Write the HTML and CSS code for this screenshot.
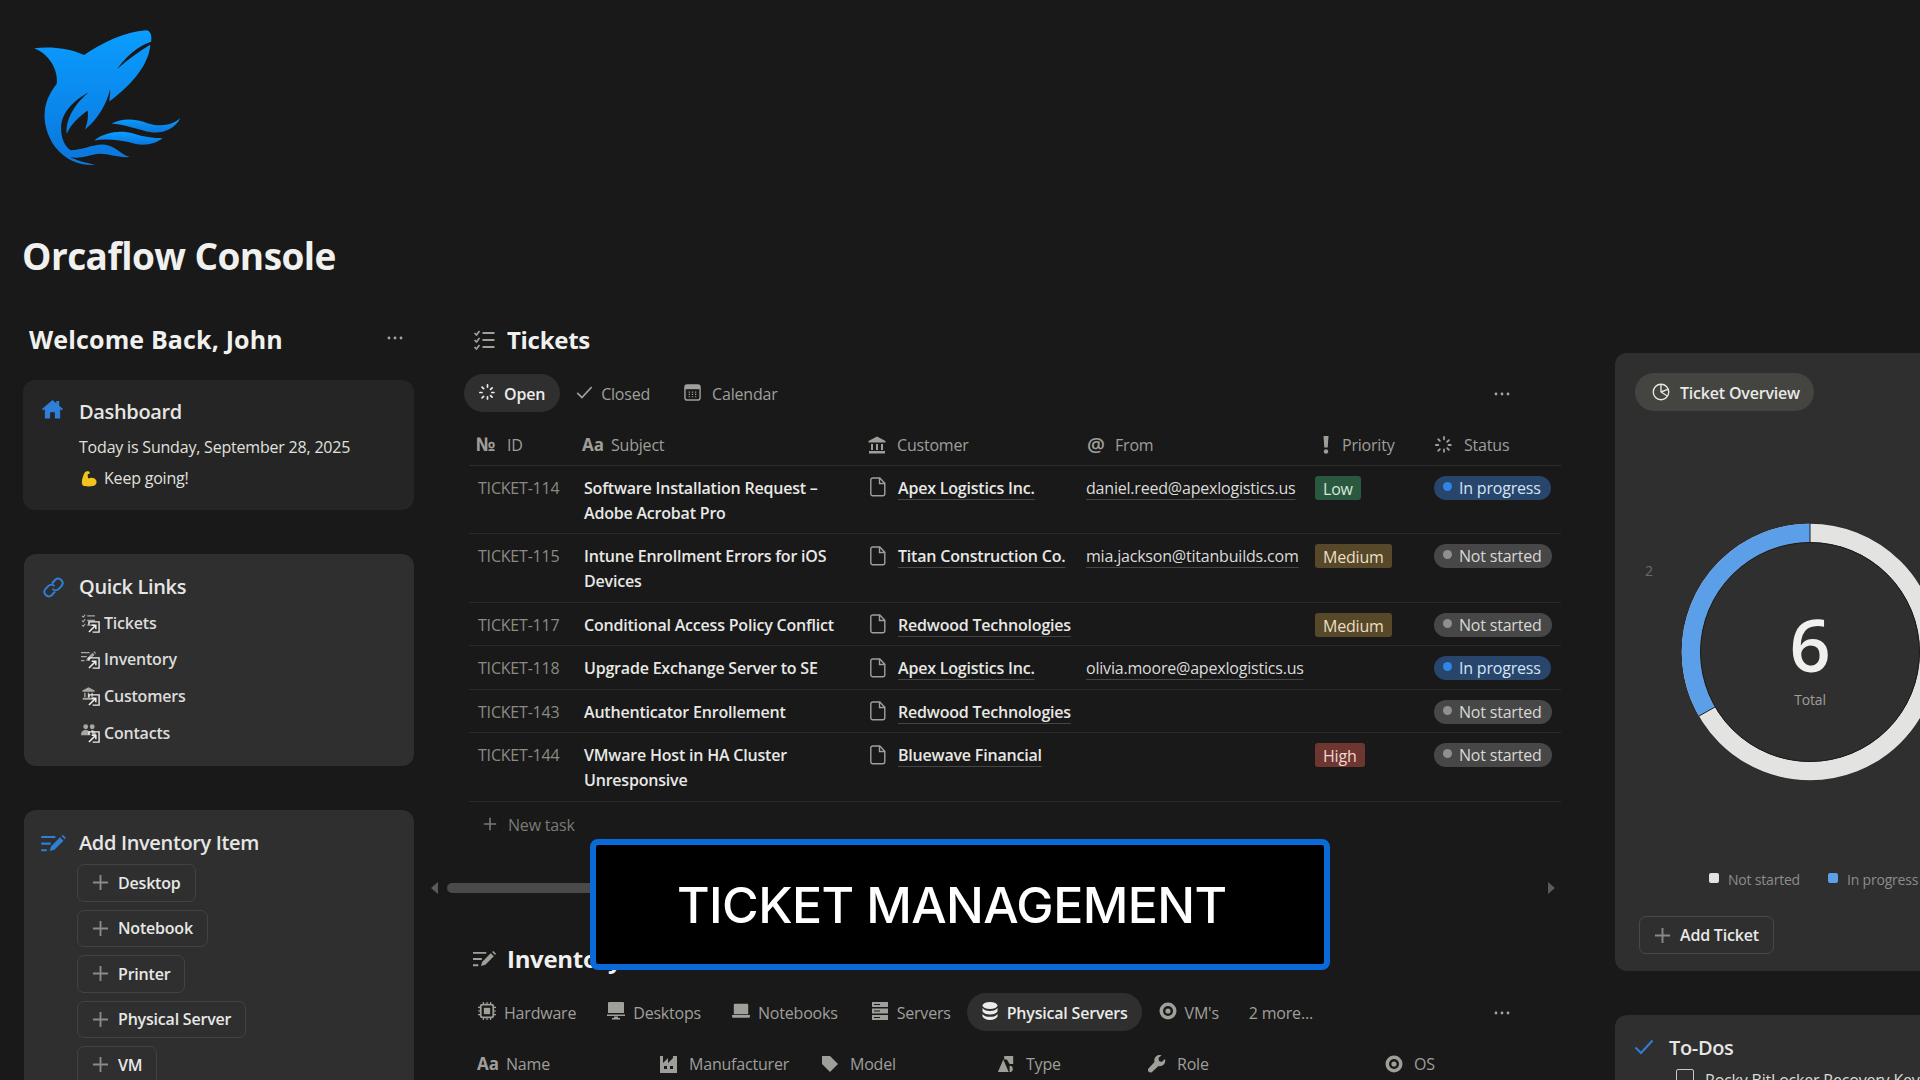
FILE: index.html
```html
<!DOCTYPE html>
<html lang="en">
<head>
<meta charset="utf-8">
<title>Orcaflow Console</title>
<link rel="stylesheet" href="styles.css">
</head>
<body>
<svg class="defs" width="0" height="0" aria-hidden="true">
  <defs>
    <linearGradient id="orca" x1="0" y1="0" x2="0" y2="1">
      <stop offset="0" stop-color="#0a9dff"/><stop offset="1" stop-color="#0b76dc"/>
    </linearGradient>
    <symbol id="i-tasks" viewBox="0 0 22 20"><path d="M1 3l2 2 3-4M1 10l2 2 3-4M1 17l2 2 3-4" fill="none" stroke="currentColor" stroke-width="1.7"/><path d="M9 3h12M9 10h12M9 17h12" stroke="currentColor" stroke-width="2" fill="none"/></symbol>
    <symbol id="i-spin" viewBox="0 0 20 20"><path d="M10 1v4M10 15v4M1 10h4M15 10h4M3.6 3.6l2.8 2.8M13.6 13.6l2.8 2.8M3.6 16.4l2.8-2.8M13.6 6.4l2.8-2.8" stroke="currentColor" stroke-width="2" stroke-dasharray="2.6 9" fill="none" stroke-linecap="round"/></symbol>
    <symbol id="i-check" viewBox="0 0 20 16"><path d="M1.5 8.5l5.5 5.5L18.5 1.5" fill="none" stroke="currentColor" stroke-width="2"/></symbol>
    <symbol id="i-cal" viewBox="0 0 18 18"><rect x="1" y="1" width="16" height="16" rx="2.5" fill="none" stroke="currentColor" stroke-width="1.5"/><rect x="1" y="1" width="16" height="4.5" fill="currentColor"/><path d="M5 8.5h1.4M8.3 8.5h1.4M11.6 8.5h1.4M5 11h1.4M8.3 11h1.4M11.6 11h1.4M5 13.5h1.4M8.3 13.5h1.4M11.6 13.5h1.4" stroke="currentColor" stroke-width="1.3"/></symbol>
    <symbol id="i-bank" viewBox="0 0 18 18"><path d="M9 .5L17.5 5v1.500H.5V5z" fill="currentColor"/><path d="M3 8h2v6H3zM8 8h2v6H8zM13 8h2v6h-2zM1 15h16v2.500H1z" fill="currentColor"/></symbol>
    <symbol id="i-doc" viewBox="0 0 16 20"><path d="M2.800 1h7l5 5.200v10.600a2 2 0 0 1-2 2H2.800a2 2 0 0 1-2-2V3a2 2 0 0 1 2-2zM9.500 1.200V6.500h5" fill="none" stroke="currentColor" stroke-width="1.400"/></symbol>
    <symbol id="i-plus" viewBox="0 0 18 18"><path d="M9 1v16M1 9h16" stroke="currentColor" stroke-width="2" fill="none"/></symbol>
    <symbol id="i-dots" viewBox="0 0 16 4"><circle cx="2" cy="2" r="1.400" fill="currentColor"/><circle cx="8" cy="2" r="1.400" fill="currentColor"/><circle cx="14" cy="2" r="1.400" fill="currentColor"/></symbol>
    <symbol id="i-home" viewBox="0 0 22 20"><path d="M11 .5l4 3.500V1.500h3v5.100L22 10l-1.300 1.500-1.700-1.400V20h-5.500v-6.500h-5V20H3V10.100l-1.700 1.400L0 10z" fill="currentColor"/></symbol>
    <symbol id="i-link" viewBox="0 0 21 21"><path d="M9 6.500l3.500-4a4.500 4.500 0 0 1 6.300 6.200l-3 3.200a4.500 4.500 0 0 1-6.300 0M12 14.500l-3.500 4a4.500 4.500 0 0 1-6.300-6.200l3-3.200a4.500 4.500 0 0 1 6.300 0" fill="none" stroke="currentColor" stroke-width="2"/></symbol>
    <symbol id="i-compose" viewBox="0 0 26 18"><path d="M0 1h15v2.200H0zM0 8h10v2.200H0zM0 15h6v2.200H0z" fill="currentColor"/><path d="M9 17l1.500-5L20 2.500l3.500 3.500L14 15.500zM21.500 1l1.500-1 3 3-1 1.500z" fill="currentColor"/></symbol>
    <symbol id="i-arrowbox" viewBox="0 0 13 13"><path d="M1 4V1h11v11H5" fill="none" stroke="currentColor" stroke-width="1.500"/><path d="M1 12l7-7M4 4.500h4.500V9" fill="none" stroke="currentColor" stroke-width="1.600"/></symbol>
    <symbol id="i-people" viewBox="0 0 16 14"><circle cx="5" cy="3" r="2.600" fill="currentColor"/><circle cx="12" cy="3" r="2.600" fill="currentColor"/><path d="M0 12c0-4 2-5.500 5-5.500s4.500 1.500 5 5.500zM11 6.500c3 0 5 1.500 5 5.500h-4z" fill="currentColor"/></symbol>
    <symbol id="i-pie" viewBox="0 0 20 20"><circle cx="10" cy="10" r="8.600" fill="none" stroke="currentColor" stroke-width="1.500"/><path d="M10 1.500V10l7 4.500M10 10l7.500-3" fill="none" stroke="currentColor" stroke-width="1.500"/></symbol>
    <symbol id="i-chip" viewBox="0 0 20 20"><rect x="3" y="3" width="14" height="14" rx="2" fill="none" stroke="currentColor" stroke-width="2"/><rect x="6.500" y="6.500" width="7" height="7" fill="currentColor"/><path d="M6 0v3M10 0v3M14 0v3M6 17v3M10 17v3M14 17v3M0 6h3M0 10h3M0 14h3M17 6h3M17 10h3M17 14h3" stroke="currentColor" stroke-width="1.300"/></symbol>
    <symbol id="i-desktop" viewBox="0 0 18 18"><path d="M2 0h14a1 1 0 0 1 1 1v10H1V1a1 1 0 0 1 1-1zM0 12.500h18V14H0zM7 14.500h4V16h2v1.500H5V16h2z" fill="currentColor"/></symbol>
    <symbol id="i-laptop" viewBox="0 0 20 16"><path d="M3 0h14a1 1 0 0 1 1 1v10.500H2V1a1 1 0 0 1 1-1zM0 12.500h20V14a1.500 1.500 0 0 1-1.500 1.500h-17A1.500 1.500 0 0 1 0 14z" fill="currentColor"/></symbol>
    <symbol id="i-server" viewBox="0 0 16 18"><path d="M0 0h16v5H0zM0 6.500h16v5H0zM0 13h16v5H0z" fill="currentColor"/><path d="M2 2.500h6M2 9h6M2 15.500h6" stroke="#191919" stroke-width="1.200"/></symbol>
    <symbol id="i-db" viewBox="0 0 16 18"><ellipse cx="8" cy="3.500" rx="7.500" ry="3.500" fill="currentColor"/><path d="M.5 6c1.500 2 3.500 3 7.500 3s6-1 7.500-3v3.500c-1.500 2-3.500 3-7.500 3s-6-1-7.500-3zM.5 12c1.500 2 3.500 2.800 7.500 2.800s6-.8 7.500-2.800v2.500C14 16.800 12 18 8 18s-6-1.200-7.500-3.500z" fill="currentColor"/></symbol>
    <symbol id="i-disc" viewBox="0 0 18 18"><circle cx="9" cy="9" r="8.500" fill="currentColor"/><circle cx="9" cy="9" r="5" fill="#191919"/><circle cx="9" cy="9" r="2.600" fill="currentColor"/></symbol>
    <symbol id="i-factory" viewBox="0 0 18 18"><path d="M0 18V1h3v7l5-5v5l5-5V1h4v17zM4 11v3h3v-3zM10 11v3h3v-3z" fill="currentColor" fill-rule="evenodd"/></symbol>
    <symbol id="i-tag" viewBox="0 0 18 18"><path d="M1 1h8l8 8-8 8-8-8z" fill="currentColor"/></symbol>
    <symbol id="i-shapes" viewBox="0 0 20 18"><path d="M8 0h10v9h-4L11 4H8z" fill="currentColor"/><path d="M7 4l6 14H1zM14 11a3.500 3.500 0 1 1 0 7z" fill="currentColor"/></symbol>
    <symbol id="i-wrench" viewBox="0 0 18 18"><path d="M17 4l-3.500 3-2.500-1-.5-3L13.500.2A5.500 5.500 0 0 0 6.500 7L.5 13.500a2.500 2.500 0 0 0 3.500 3.500l6.500-6A5.500 5.500 0 0 0 17 4z" fill="currentColor"/></symbol>
    <symbol id="i-bang" viewBox="0 0 6 18"><path d="M.5 0h5l-.8 11.500H1.300z" fill="currentColor"/><circle cx="3" cy="15.500" r="2.200" fill="currentColor"/></symbol>
    <symbol id="i-muscle" viewBox="0 0 16 16"><path d="M5 .5c1.800-.5 3.500 0 3.800 1 .2 1-.6 1.500-2 1.700C6.500 5 6.800 6.500 7.500 7.500c2.500-1.500 6-1 7.500 1.500 1.300 2.300.3 5.500-3 6-3.500.6-8 .6-10-.5C.5 13.500.5 9 2 5.500 2.800 3.500 3.500 1 5 .5z" fill="#f4c21c"/></symbol>
  </defs>
</svg>

<div class="page">
  <header class="top">
    <svg class="logo" viewBox="40 40 445 412" aria-label="Orcaflow logo">
      <path fill="url(#orca)" d="M42 98C85 92 145 96 192 118C245 82 315 48 378 44C393 45 396 60 394 78C355 90 315 125 292 160C325 130 360 105 391 87C388 140 345 200 268 258C268 245 272 235 270 222C260 265 235 310 195 342C203 320 205 305 203 285C175 305 150 330 140 355C135 320 160 265 207 230C160 255 125 290 123 335C122 370 135 395 152 405C190 405 230 380 265 390C290 397 305 418 330 425C290 428 260 412 230 416C205 420 180 432 150 425C175 437 205 445 225 448C190 452 140 440 105 395C80 360 70 320 74 285C78 250 95 225 110 205C115 160 85 115 42 98Z"/>
      <path fill="url(#orca)" d="M275 325C310 305 350 312 385 324C420 334 455 332 482 308C460 350 415 358 375 347C340 337 305 326 275 325Z"/>
      <path fill="url(#orca)" d="M222 375C255 350 300 343 340 354C370 364 400 368 428 368C400 392 360 392 325 380C290 372 255 370 222 375Z"/>
    </svg>
    <h1 class="title">Orcaflow Console</h1>
  </header>

  <div class="columns">
    <aside class="left">
      <div class="welcome">
        <h2 class="h-big h-welcome">Welcome Back, John</h2>
        <svg class="dots"><use href="#i-dots"/></svg>
      </div>

      <section class="card card-dash">
        <div class="card-head">
          <svg class="ci ci-home"><use href="#i-home"/></svg>
          <h3>Dashboard</h3>
        </div>
        <p class="dash-line">Today is Sunday, September 28, 2025</p>
        <p class="dash-line keep"><svg class="muscle"><use href="#i-muscle"/></svg>Keep going!</p>
      </section>

      <section class="card card-links">
        <div class="card-head">
          <svg class="ci ci-link"><use href="#i-link"/></svg>
          <h3>Quick Links</h3>
        </div>
        <a class="qlink"><span class="qi"><svg class="qi-b"><use href="#i-tasks"/></svg><svg class="qi-a"><use href="#i-arrowbox"/></svg></span>Tickets</a>
        <a class="qlink"><span class="qi"><svg class="qi-b"><use href="#i-compose"/></svg><svg class="qi-a"><use href="#i-arrowbox"/></svg></span>Inventory</a>
        <a class="qlink"><span class="qi"><svg class="qi-b"><use href="#i-bank"/></svg><svg class="qi-a"><use href="#i-arrowbox"/></svg></span>Customers</a>
        <a class="qlink"><span class="qi"><svg class="qi-b"><use href="#i-people"/></svg><svg class="qi-a"><use href="#i-arrowbox"/></svg></span>Contacts</a>
      </section>

      <section class="card card-add">
        <div class="card-head">
          <svg class="ci ci-compose"><use href="#i-compose"/></svg>
          <h3>Add Inventory Item</h3>
        </div>
        <div class="btn-stack">
          <button class="btn"><svg class="plus"><use href="#i-plus"/></svg>Desktop</button>
          <button class="btn"><svg class="plus"><use href="#i-plus"/></svg>Notebook</button>
          <button class="btn"><svg class="plus"><use href="#i-plus"/></svg>Printer</button>
          <button class="btn"><svg class="plus"><use href="#i-plus"/></svg>Physical Server</button>
          <button class="btn"><svg class="plus"><use href="#i-plus"/></svg>VM</button>
        </div>
      </section>
    </aside>

    <main class="mid">
      <div class="db-title"><svg class="db-icon"><use href="#i-tasks"/></svg><h2 class="h-big">Tickets</h2></div>
      <div class="tabs">
        <span class="tab active"><svg class="ti"><use href="#i-spin"/></svg>Open</span>
        <span class="tab t-closed"><svg class="ti"><use href="#i-check"/></svg>Closed</span>
        <span class="tab t-cal"><svg class="ti"><use href="#i-cal"/></svg>Calendar</span>
        <svg class="dots tab-dots"><use href="#i-dots"/></svg>
      </div>

      <table class="tbl">
        <colgroup><col class="c1"><col class="c2"><col class="c3"><col class="c4"><col class="c5"><col class="c6"></colgroup>
        <thead>
          <tr>
            <th><span class="hcell"><b class="glyph">№</b>ID</span></th>
            <th><span class="hcell"><b class="glyph glyph-aa">Aa</b>Subject</span></th>
            <th><span class="hcell"><svg class="hi"><use href="#i-bank"/></svg>Customer</span></th>
            <th><span class="hcell"><b class="glyph glyph-at">@</b>From</span></th>
            <th><span class="hcell hcell-pri"><svg class="hi hi-bang"><use href="#i-bang"/></svg>Priority</span></th>
            <th><span class="hcell"><svg class="hi"><use href="#i-spin"/></svg>Status</span></th>
          </tr>
        </thead>
        <tbody>
          <tr>
            <td class="tid">TICKET-114</td><td class="subj">Software Installation Request – Adobe Acrobat Pro</td>
            <td><span class="cust"><svg class="doc"><use href="#i-doc"/></svg><u>Apex Logistics Inc.</u></span></td>
            <td><u class="mail">daniel.reed@apexlogistics.us</u></td>
            <td><span class="tag low">Low</span></td>
            <td><span class="pill prog"><i></i>In progress</span></td>
          </tr>
          <tr>
            <td class="tid">TICKET-115</td><td class="subj">Intune Enrollment Errors for iOS Devices</td>
            <td><span class="cust"><svg class="doc"><use href="#i-doc"/></svg><u>Titan Construction Co.</u></span></td>
            <td><u class="mail">mia.jackson@titanbuilds.com</u></td>
            <td><span class="tag med">Medium</span></td>
            <td><span class="pill none"><i></i>Not started</span></td>
          </tr>
          <tr>
            <td class="tid">TICKET-117</td><td class="subj">Conditional Access Policy Conflict</td>
            <td><span class="cust"><svg class="doc"><use href="#i-doc"/></svg><u>Redwood Technologies</u></span></td>
            <td></td>
            <td><span class="tag med">Medium</span></td>
            <td><span class="pill none"><i></i>Not started</span></td>
          </tr>
          <tr>
            <td class="tid">TICKET-118</td><td class="subj">Upgrade Exchange Server to SE</td>
            <td><span class="cust"><svg class="doc"><use href="#i-doc"/></svg><u>Apex Logistics Inc.</u></span></td>
            <td><u class="mail">olivia.moore@apexlogistics.us</u></td>
            <td></td>
            <td><span class="pill prog"><i></i>In progress</span></td>
          </tr>
          <tr>
            <td class="tid">TICKET-143</td><td class="subj">Authenticator Enrollement</td>
            <td><span class="cust"><svg class="doc"><use href="#i-doc"/></svg><u>Redwood Technologies</u></span></td>
            <td></td>
            <td></td>
            <td><span class="pill none"><i></i>Not started</span></td>
          </tr>
          <tr>
            <td class="tid">TICKET-144</td><td class="subj">VMware Host in HA Cluster Unresponsive</td>
            <td><span class="cust"><svg class="doc"><use href="#i-doc"/></svg><u>Bluewave Financial</u></span></td>
            <td></td>
            <td><span class="tag high">High</span></td>
            <td><span class="pill none"><i></i>Not started</span></td>
          </tr>
        </tbody>
      </table>
      <div class="new-task"><svg class="nt-plus"><use href="#i-plus"/></svg>New task</div>

      <div class="scroll">
        <span class="arrow arrow-l"></span>
        <span class="thumb"></span>
        <span class="arrow arrow-r"></span>
      </div>

      <div class="db-title inv-title"><svg class="db-icon"><use href="#i-compose"/></svg><h2 class="h-big">Inventory</h2></div>
      <div class="tabs inv-tabs">
        <span class="tab t-hw"><svg class="ti"><use href="#i-chip"/></svg>Hardware</span>
        <span class="tab t-dk"><svg class="ti"><use href="#i-desktop"/></svg>Desktops</span>
        <span class="tab t-nb"><svg class="ti"><use href="#i-laptop"/></svg>Notebooks</span>
        <span class="tab t-sv"><svg class="ti"><use href="#i-server"/></svg>Servers</span>
        <span class="tab active t-ps"><svg class="ti"><use href="#i-db"/></svg>Physical Servers</span>
        <span class="tab t-vm"><svg class="ti"><use href="#i-disc"/></svg>VM's</span>
        <span class="tab t-more">2 more...</span>
        <svg class="dots tab-dots"><use href="#i-dots"/></svg>
      </div>
      <div class="inv-head">
        <span class="hcell ih1"><b class="glyph glyph-aa">Aa</b>Name</span>
        <span class="hcell ih2"><svg class="hi"><use href="#i-factory"/></svg>Manufacturer</span>
        <span class="hcell ih3"><svg class="hi"><use href="#i-tag"/></svg>Model</span>
        <span class="hcell ih4"><svg class="hi"><use href="#i-shapes"/></svg>Type</span>
        <span class="hcell ih5"><svg class="hi"><use href="#i-wrench"/></svg>Role</span>
        <span class="hcell ih6"><svg class="hi"><use href="#i-disc"/></svg>OS</span>
      </div>
    </main>

    <aside class="right">
      <section class="rcard r-overview">
        <span class="ov-btn"><svg class="ov-i"><use href="#i-pie"/></svg>Ticket Overview</span>
        <div class="chart">
          <span class="axis">2</span>
          <div class="donut">
            <svg class="donut-svg" viewBox="0 0 258 258">
              <circle cx="129" cy="129" r="128.500" fill="#1c1c1c"/>
              <circle cx="129" cy="129" r="119" fill="none" stroke="#e3e3e1" stroke-width="18.500"/>
              <circle cx="129" cy="129" r="119" fill="none" stroke="#5b9fe9" stroke-width="18.500" pathLength="300" stroke-dasharray="100 200" transform="rotate(150 129 129)"/>
              <path d="M129 0v19M18 193l16-9" stroke="#1c1c1c" stroke-width="1"/>
              <circle cx="129" cy="129" r="109.500" fill="#2f2f2f" stroke="#1c1c1c" stroke-width="1"/>
            </svg>
            <div class="donut-num"><strong>6</strong><span>Total</span></div>
          </div>
        </div>
        <div class="legend">
          <span class="lg"><i class="sq sq-w"></i>Not started</span>
          <span class="lg"><i class="sq sq-b"></i>In progress</span>
        </div>
        <button class="btn btn-ticket"><svg class="plus"><use href="#i-plus"/></svg>Add Ticket</button>
      </section>
      <section class="rcard r-todo">
        <div class="todo-head"><svg class="ci ci-todo"><use href="#i-check"/></svg><h3>To-Dos</h3></div>
        <div class="todo-row"><span class="box"></span>Rocky BitLocker Recovery Key</div>
      </section>
    </aside>
  </div>

  <div class="banner"><span>TICKET MANAGEMENT</span></div>
</div>
</body>
</html>
```

FILE: styles.css
```css
* { box-sizing: border-box; }
html, body { margin: 0; padding: 0; background: #191919; }
body { font-family: "Open Sans", "Noto Sans", "Liberation Sans", sans-serif; color: #e8e8e6; font-size: 16px; letter-spacing: -0.2px; }
.defs { position: absolute; }
.page { position: relative; width: 1920px; height: 1080px; overflow: hidden; }
h1, h2, h3, p { margin: 0; }
svg { display: block; flex: none; }
u { text-decoration: underline 1px #454545; text-underline-offset: 5px; }

.top { padding: 29px 0 0 33px; height: 290px; }
.logo { width: 149px; height: 137px; }
.title { margin: 67px 0 0 -11px; font-size: 37px; line-height: 46px; font-weight: 700; color: #f0f0ee; letter-spacing: -0.55px; }

.columns { display: flex; align-items: flex-start; padding-left: 23px; }
.left { width: 391px; flex: none; margin-right: 55px; padding-top: 30px; }
.mid { width: 1092px; flex: none; margin-right: 54px; padding-top: 30px; }
.right { width: 400px; flex: none; padding-top: 63px; }

.h-big { font-size: 24px; line-height: 40px; font-weight: 700; color: #f0f0ee; letter-spacing: -0.3px; }
.h-welcome { font-size: 25px; line-height: 38px; letter-spacing: 0.15px; }
.welcome { display: flex; align-items: flex-start; justify-content: space-between; padding: 0 11px 0 6px; height: 40px; }
.welcome .dots { margin-top: 16px; }
.dots { width: 16px; height: 4px; color: #a5a5a2; }

.card { border-radius: 12px; }
.card h3, .rcard h3 { font-size: 20px; line-height: 28px; font-weight: 600; color: #e6e6e4; letter-spacing: -0.35px; }
.card-head { display: flex; align-items: center; height: 28px; }
.ci { color: #2f7ed8; }
.card-dash { background: #252525; height: 130px; margin-top: 20px; padding: 18px 0 0 19px; }
.card-dash .card-head h3 { margin-left: 16px; }
.ci-home { width: 21px; height: 20px; margin-top: -7px; }
.dash-line { margin-left: 37px; font-size: 16px; line-height: 31px; color: #e0e0de; }
.card-dash .card-head { margin-bottom: 6px; }
.keep { display: flex; align-items: center; margin-left: 39px; }
.muscle { width: 16px; height: 16px; margin-right: 7px; }

.card-links { background: #2f2f2f; height: 212px; width: 390px; margin: 44px 0 0 1px; padding: 19px 0 0 19px; }
.card-links .card-head { margin-bottom: 9px; }
.card-links h3 { margin-left: 15px; }
.ci-link { width: 21px; height: 21px; }
.qlink { display: flex; align-items: center; height: 25px; margin: 0 0 11.700px 38px; font-size: 16px; font-weight: 600; color: #dcdcda; }
.qi { position: relative; display: block; width: 23px; height: 20px; flex: none; color: #a8a7a2; }
.qi-b { position: absolute; left: 0; top: 1px; width: 15px; height: 13px; }
.qi-a { position: absolute; left: 7px; top: 8px; width: 12px; height: 12px; color: #eee; }

.card-add { background: #2f2f2f; width: 390px; height: 400px; margin: 44px 0 0 1px; padding: 19px 0 0 17px; }
.card-add h3 { margin-left: 13px; }
.ci-compose { width: 25px; height: 17px; }
.btn-stack { display: flex; flex-direction: column; align-items: flex-start; gap: 8px; margin: 7px 0 0 36px; }
.btn { display: inline-flex; align-items: center; height: 37.500px; padding: 0 14px; background: transparent; border: 1px solid #434341; border-radius: 7px; color: #e8e8e6; font: 600 16px "Open Sans", sans-serif; letter-spacing: -0.2px; }
.plus { width: 17px; height: 17px; margin-right: 9px; color: #8a8a87; }

.db-title { display: flex; align-items: center; height: 40px; padding-left: 4px; }
.db-icon { width: 23px; height: 20px; margin-right: 11px; color: #a09f9a; }
.tabs { position: relative; display: flex; align-items: center; height: 38px; margin: 14px 0 0 -5px; }
.tab { display: inline-flex; align-items: center; height: 38px; padding: 2px 15px 0; border-radius: 19px; color: #a09f9a; font-size: 16px; font-weight: 500; white-space: nowrap; }
.tab.active { background: #2f2f2f; color: #ebebe9; font-weight: 600; }
.ti { width: 17px; height: 17px; margin-right: 8px; margin-top: -4px; }
.t-closed { padding: 2px 0 0 16px; margin-right: 34px; }
.t-cal { padding: 2px 0 0; }
.t-cal .ti { margin-right: 11px; }
.tab-dots { position: absolute; right: 51px; top: 18px; }

.tbl { width: 1092px; table-layout: fixed; border-collapse: collapse; margin-top: 13px; }
.c1 { width: 107px; } .c2 { width: 285px; } .c3 { width: 217px; } .c4 { width: 229px; } .c5 { width: 119px; } .c6 { width: 135px; }
.tbl th { height: 40px; padding: 0; text-align: left; font-weight: 400; border-bottom: 1px solid #2d2d2d; }
.hcell { display: flex; align-items: center; height: 25px; color: #9f9e99; font-size: 16px; white-space: nowrap; }
.hi { width: 18px; height: 18px; margin-right: 11px; }
.hi-bang { width: 6px; margin-left: 0; margin-right: 13px; }
.tbl th .hcell-pri { padding-left: 16px; }
.tbl th:nth-child(1) .hcell { padding-left: 7px; }
.tbl th:nth-child(2) .hcell { padding-left: 6px; }
.tbl th:nth-child(3) .hcell { padding-left: 7px; }
.tbl th:nth-child(4) .hcell { padding-left: 9px; }
.tbl th:nth-child(6) .hcell { padding-left: 9px; }
.glyph { width: 31px; font-weight: 700; font-size: 19px; line-height: 25px; flex: none; letter-spacing: 0; }
.glyph-aa { width: 29px; font-size: 17px; }
.glyph-at { width: 28px; font-size: 20px; font-weight: 600; }

.tbl td { padding: 10px 8px 7.500px; vertical-align: top; line-height: 25px; font-size: 16px; border-bottom: 1px solid #2a2a2a; }
.tid { color: #8b8a85; white-space: nowrap; padding-left: 9px !important; }
.subj { font-weight: 600; color: #e8e8e6; }
.cust { display: flex; align-items: center; height: 25px; font-weight: 600; color: #e8e8e6; white-space: nowrap; }
.doc { width: 16px; height: 20px; color: #a09f9a; margin-right: 12px; margin-left: 1px; margin-top: -2px; }
.mail { color: #dcdcda; white-space: nowrap; }
.tag { display: block; width: fit-content; height: 24px; line-height: 26px; padding: 0 8px; border-radius: 3px; }
.low { background: #2b593f; color: #d6e6da; }
.med { background: #564828; color: #eadfc4; }
.high { background: #6e3630; color: #f0d6d2; }
.pill { display: flex; width: fit-content; align-items: center; height: 24px; padding: 1px 10px 0 9px; border-radius: 12px; white-space: nowrap; }
.pill i { width: 9px; height: 9px; border-radius: 50%; margin-right: 7px; margin-top: -4px; }
.prog { background: #28456c; color: #d5e4f5; }
.prog i { background: #2e86e5; }
.none { background: #474747; color: #d8d8d6; }
.none i { background: #8f8f8c; }

.new-task { display: flex; align-items: center; height: 44px; padding: 3px 0 0 14px; color: #7a7975; font-size: 16px; }
.nt-plus { width: 14px; height: 14px; margin-right: 11px; margin-top: -3px; }

.scroll { position: relative; height: 10px; margin: 37px 0 0 -37px; display: flex; align-items: center; width: 1122px; }
.thumb { display: block; width: 300px; height: 10px; margin-left: 15px; border-radius: 5px; background: #4a4a4a; }
.arrow { position: absolute; top: -1px; width: 0; height: 0; border-top: 6px solid transparent; border-bottom: 6px solid transparent; }
.arrow-l { left: -1px; border-right: 7px solid #5a5a5a; }
.arrow-r { right: -1px; border-left: 7px solid #5a5a5a; }

.inv-title { margin-top: 46px; }
.inv-tabs { margin-top: 14px; }
.inv-tabs .tab { padding: 2px 0 0; }
.inv-tabs .ti { width: 18px; height: 18px; margin-right: 8px; }
.inv-tabs .t-hw { margin-left: 14px; }
.inv-tabs .t-dk { margin-left: 31px; }
.inv-tabs .t-nb { margin-left: 31px; }
.inv-tabs .t-sv { margin-left: 33px; }
.inv-tabs .t-ps { margin-left: 16px; padding: 2px 14px 0; }
.inv-tabs .t-vm { margin-left: 17px; }
.inv-tabs .t-more { margin-left: 30px; }
.inv-head { display: flex; margin-top: 20px; height: 26px; padding-left: 8px; align-items: center; }
.ih1 { width: 183px; } .ih2 { width: 161px; } .ih3 { width: 176px; } .ih4 { width: 151px; } .ih5 { width: 237px; }

.rcard { background: #2f2f2f; border-radius: 12px 0 0 12px; }
.r-overview { height: 618px; padding: 20px 0 0 20px; }
.ov-btn { display: inline-flex; align-items: center; height: 38px; padding: 2px 14px 0 17px; border-radius: 19px; background: #444441; color: #e8e8e6; font-size: 16px; font-weight: 600; }
.ov-i { width: 18px; height: 18px; margin-right: 10px; margin-top: -2px; }
.chart { position: relative; height: 445px; }
.axis { position: absolute; left: 10px; top: 150px; color: #6b6b68; font-size: 14px; }
.donut { position: absolute; left: 46px; top: 112px; width: 258px; height: 258px; }
.donut-svg { width: 258px; height: 258px; }
.donut-num { position: absolute; inset: 0; padding-top: 18px; display: flex; flex-direction: column; align-items: center; justify-content: center; }
.donut-num strong { font-size: 72px; line-height: 60px; font-weight: 600; color: #f0f0ee; margin-top: 1px; }
.donut-num span { font-size: 14px; line-height: 18px; margin-top: 17px; color: #9f9e99; }
.legend { display: flex; gap: 28px; padding-left: 74px; height: 20px; margin-top: 13px; }
.lg { display: inline-flex; align-items: center; font-size: 14px; color: #8d8c88; white-space: nowrap; }
.sq { width: 10px; height: 10px; border-radius: 2px; margin-right: 9px; margin-top: -3px; }
.sq-w { background: #e3e3e1; }
.sq-b { background: #5b9fe9; }
.btn-ticket { margin: 27px 0 0 4px; height: 38px; border-color: #484846; }
.r-todo { margin-top: 44px; height: 100px; padding: 19px 0 0 20px; }
.todo-head { display: flex; align-items: center; height: 28px; }
.ci-todo { width: 22px; height: 16px; margin: -2px 14px 0 -2px; }
.todo-row { display: flex; align-items: flex-start; margin: 7px 0 0 41px; font-size: 16px; line-height: 22px; color: #dcdcda; white-space: nowrap; }
.box { width: 18px; height: 18px; border: 1.500px solid #c8c8c6; border-radius: 2px; margin-right: 11px; flex: none; }

.banner { position: absolute; left: 590px; top: 839px; width: 740px; height: 131px; display: flex; align-items: center; padding: 1px 0 0 81px; background: #000; border: 6px solid #0a6bd8; border-radius: 8px; }
.banner span { font-family: "Inter", "Lato", sans-serif; font-size: 50px; font-weight: 500; letter-spacing: -0.6px; color: #fff; white-space: nowrap; }
```
